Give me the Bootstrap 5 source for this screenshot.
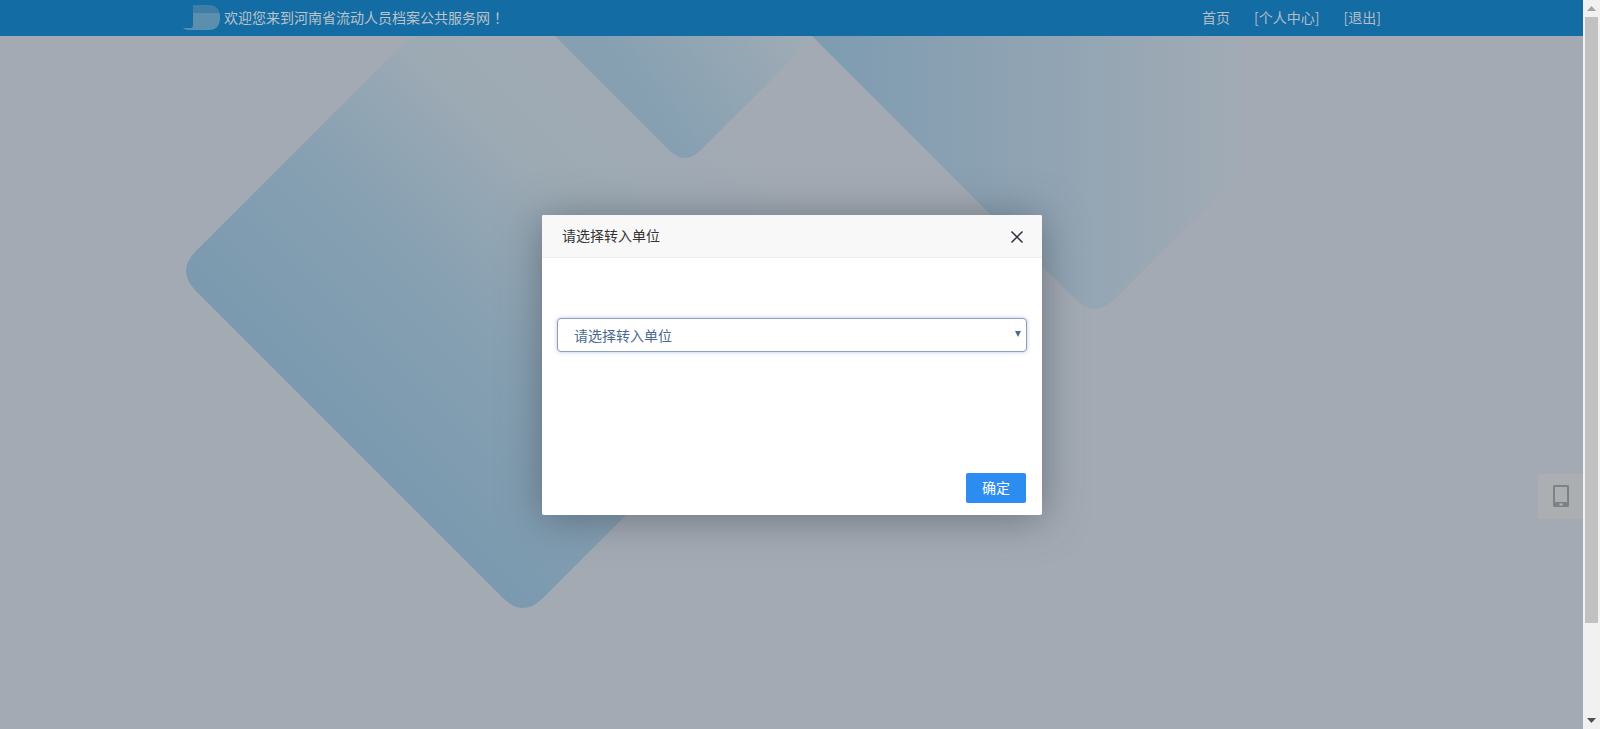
<!DOCTYPE html>
<html lang="zh-CN">
<head>
  <meta charset="UTF-8" />
  <meta name="viewport" content="width=device-width, initial-scale=1.0" />
  <title>河南省流动人员档案公共服务网</title>
  <link href="https://cdn.jsdelivr.net/npm/bootstrap@5.3.3/dist/css/bootstrap.min.css" rel="stylesheet" />
  <style>
    html, body { height: 729px; overflow: hidden; }
    body {
      font-family: "Noto Sans CJK SC", "Liberation Sans", sans-serif;
      font-size: 14px;
      background-color: #a3aab4;
    }
    .page-area { position: relative; }
    .bg-art { position: absolute; left: 0; top: 0; width: 1583px; height: 729px; }
    .top-bar {
      position: relative;
      height: 36px;
      background-color: #136ca3;
      color: #bcc3c9;
      padding: 0 202px 2px 183px;
    }
    .top-bar a { color: #b6bec5; text-decoration: none; }
    .top-links { gap: 24px; }
    .logo-art { width: 38px; height: 26px; margin: 2px 3px 0 0; }
    .bang { padding-left: 4px; }
    .dialog-box {
      position: absolute;
      left: 542px;
      top: 215px;
      width: 500px;
      height: 300px;
      background-color: #fff;
      border: 0;
      border-radius: 2px;
      box-shadow: 0 3px 42px rgba(60, 70, 80, .55);
    }
    .dialog-box .modal-header {
      height: 43px;
      padding: 0 20px 2px;
      background-color: #f8f8f8;
      border-bottom: 1px solid #eee;
      border-radius: 2px 2px 0 0;
    }
    .dialog-title { color: #333; font-size: 14px; }
    .close-x { width: 14px; height: 14px; padding: 0; margin: 4px -2px 0 0; border: 0; }
    .dialog-box .modal-body { padding: 60px 15px 0; }
    .unit-select {
      height: 34px;
      padding: 0 16px;
      font-size: 14px;
      color: #4a6a90;
      border: 1px solid #8ba0c4;
      border-radius: 4px;
      box-shadow: 0 0 4px rgba(100, 130, 190, .45);
      background-image: none;
    }
    .select-wrap { position: relative; }
    .select-caret {
      position: absolute;
      right: 6px;
      top: 13px;
      width: 0;
      height: 0;
      border-left: 3px solid transparent;
      border-right: 3px solid transparent;
      border-top: 6px solid #4f6a8c;
    }
    .dialog-box .modal-footer { padding: 0 16px 12px 0; border: 0; }
    .ok-btn {
      width: 60px;
      height: 30px;
      margin: 0;
      padding: 0 0 2px;
      font-size: 14px;
      background-color: #2d8cf0;
      border: 0;
      border-radius: 2px;
    }
    .side-tool {
      position: absolute;
      right: 0;
      top: 474px;
      width: 45px;
      height: 45px;
      padding-bottom: 2px;
      background-color: #acafb1;
    }
    .fake-scroll { width: 17px; background-color: #f1f1f1; }
    .scroll-arrow { height: 17px; }
    .scroll-thumb { height: 606px; margin: 0 2px; background-color: #c1c1c1; }
  </style>
</head>
<body class="d-flex">
  <div class="page-area flex-grow-1">
    <svg class="bg-art" viewBox="0 0 1583 729">
      <defs>
        <linearGradient id="fadeBig" gradientUnits="userSpaceOnUse" x1="300" y1="385" x2="643" y2="42">
          <stop offset="0" stop-color="#7b9aaf" />
          <stop offset=".35" stop-color="#87a0b2" />
          <stop offset=".65" stop-color="#9caab4" />
          <stop offset="1" stop-color="#a3aab4" />
        </linearGradient>
        <linearGradient id="fadeSmall" gradientUnits="userSpaceOnUse" x1="660" y1="120" x2="800" y2="20">
          <stop offset="0" stop-color="#86a0b2" />
          <stop offset="1" stop-color="#a0acb5" />
        </linearGradient>
        <linearGradient id="fadeRight" gradientUnits="userSpaceOnUse" x1="830" y1="100" x2="1240" y2="100">
          <stop offset="0" stop-color="#7f9cb1" />
          <stop offset="1" stop-color="#a1abb5" />
        </linearGradient>
      </defs>
      <path d="M196 251L503-56Q523-76 543-56L850 251Q870 271 850 291L543 598Q523 618 503 598L196 291Q176 271 196 251Z" fill="url(#fadeBig)" />
      <path d="M669 150L540 21H830L701 150Q685 166 669 150Z" fill="url(#fadeSmall)" />
      <path d="M1075 299L800 24H1240V174L1115 299Q1095 319 1075 299Z" fill="url(#fadeRight)" />
    </svg>

    <div class="top-bar d-flex align-items-center justify-content-between">
      <div class="d-flex align-items-center">
        <svg class="logo-art" viewBox="0 0 38 26">
          <path d="M10 0h15c7 0 12 3 12 12s-4 13-12 13H8c-4 0-7-1-8-2h8c2 0 2-2 2-5V0z" fill="#3f7ea6" />
          <path d="M10 8h26.500c.4 1.200.5 2.600.5 4 0 9-4 13-12 13H8c-4 0-7-1-8-2h8c2 0 2-2 2-5V8z" fill="#5b8fae" />
        </svg>
        <span>欢迎您来到河南省流动人员档案公共服务网<span class="bang">！</span></span>
      </div>
      <div class="d-flex top-links">
        <a href="#">首页</a>
        <a href="#">[个人中心]</a>
        <a href="#">[退出]</a>
      </div>
    </div>

    <div class="side-tool d-flex align-items-center justify-content-center">
      <svg width="16" height="22" viewBox="0 0 16 22">
        <path d="M1.500 0h13A1.500 1.500 0 0 1 16 1.500v19a1.500 1.500 0 0 1-1.500 1.500h-13A1.500 1.500 0 0 1 0 20.500v-19A1.500 1.500 0 0 1 1.500 0zM2 2v15h12V2z" fill="#7f8285" />
        <rect x="6.500" y="18.500" width="3" height="2" fill="#b5b7b9" />
      </svg>
    </div>

    <div class="modal-content dialog-box">
      <div class="modal-header">
        <span class="dialog-title">请选择转入单位</span>
        <button type="button" class="btn close-x ms-auto d-flex" aria-label="关闭">
          <svg width="14" height="14" viewBox="0 0 14 14"><path d="M1.500 1.500l11 11M12.500 1.500l-11 11" stroke="#2b2f3a" stroke-width="1.500" /></svg>
        </button>
      </div>
      <div class="modal-body">
        <div class="select-wrap">
          <select class="form-select unit-select">
            <option>请选择转入单位</option>
          </select>
          <span class="select-caret"></span>
        </div>
      </div>
      <div class="modal-footer">
        <button type="button" class="btn btn-primary ok-btn">确定</button>
      </div>
    </div>
  </div>

  <div class="fake-scroll d-flex flex-column">
    <div class="scroll-arrow d-flex align-items-center justify-content-center">
      <svg width="9" height="5" viewBox="0 0 9 5"><path d="M4.500 0L9 5H0z" fill="#a3a3a3" /></svg>
    </div>
    <div class="scroll-thumb"></div>
    <div class="flex-grow-1"></div>
    <div class="scroll-arrow d-flex align-items-center justify-content-center">
      <svg width="9" height="5" viewBox="0 0 9 5"><path d="M0 0h9L4.500 5z" fill="#505050" /></svg>
    </div>
  </div>

  <script src="https://cdn.jsdelivr.net/npm/bootstrap@5.3.3/dist/js/bootstrap.bundle.min.js"></script>
</body>
</html>
